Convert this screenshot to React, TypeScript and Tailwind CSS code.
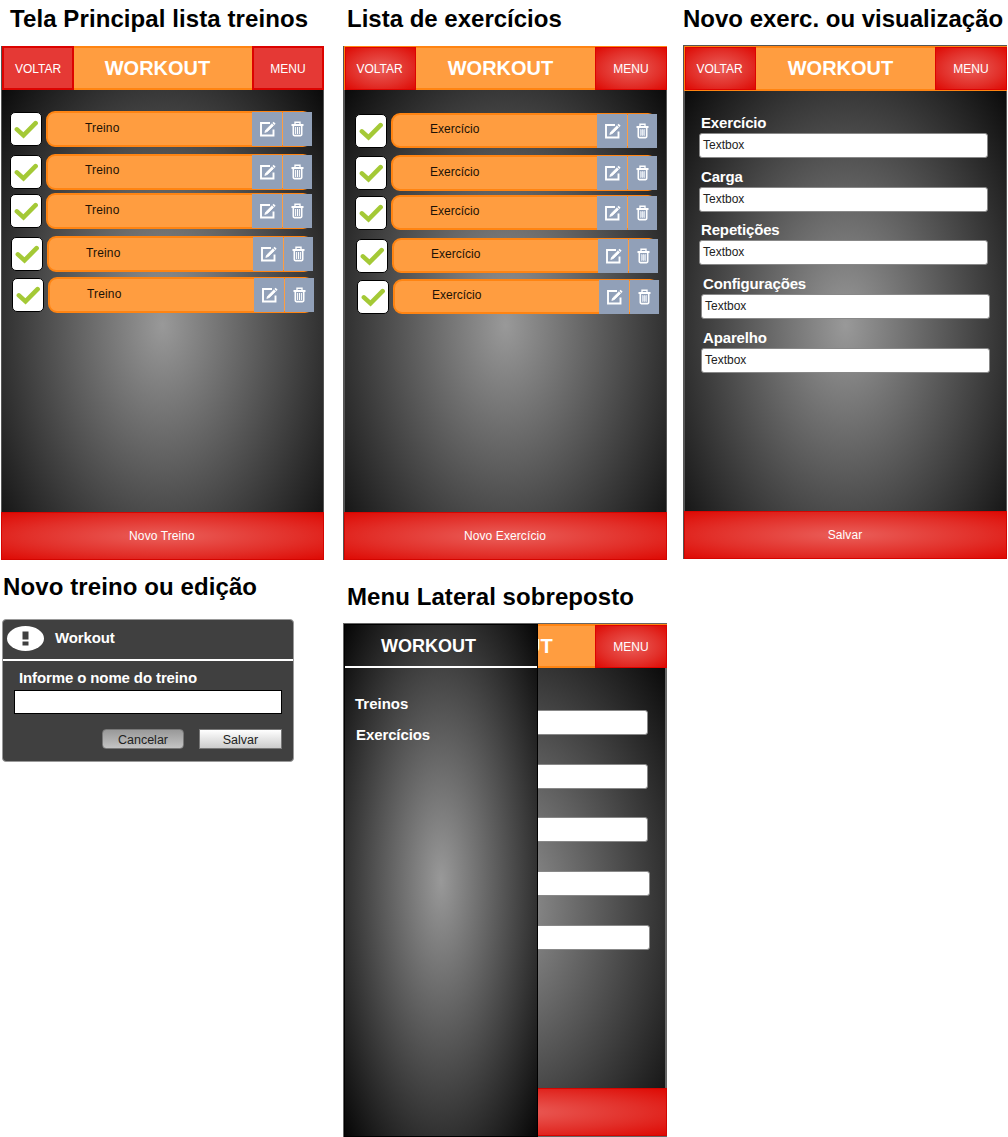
import React from "react";

const screenGlow = "bg-[radial-gradient(230px_358px_at_50%_279px,#999999_0%,#040404_100%)]";
const menuGlow = "bg-[radial-gradient(ellipse_farthest-corner_at_50%_50%,#999999_0%,#060606_100%)]";
const redGlow = "bg-[radial-gradient(ellipse_farthest-corner_at_50%_50%,#ea5f5a_0%,#e22f29_60%,#de0a04_100%)]";

function Title({ children, className }: { children: string; className: string }) {
  return <h2 className={`whitespace-nowrap text-[24px] font-bold leading-[28px] text-black ${className}`}>{children}</h2>;
}

function Check() {
  return (
    <svg viewBox="0 0 24 20" className="mt-[2px] h-[20px] w-[24px]" fill="none" stroke="#a4c936" strokeWidth="4.6">
      <path d="M2.9 9.4 9.5 15.4 21.6 3.2" strokeLinecap="round" strokeLinejoin="miter" />
    </svg>
  );
}

function EditIcon() {
  return (
    <svg viewBox="0 0 17 17" className="h-[17px] w-[17px]" fill="none" stroke="#fff">
      <path d="M11 2H2v12.5h12.5V8.5" strokeWidth="1.9" />
      <path d="M5.8 11.4 6.8 8.9 13 2.8l1.6 1.6L8.4 10.5Z" fill="#fff" strokeWidth="0.8" />
      <path d="m14 1.3 2 2" strokeWidth="1.8" />
    </svg>
  );
}

function TrashIcon({ solid }: { solid?: boolean }) {
  return (
    <svg viewBox="0 0 13 16" className="h-[16px] w-[13px]" fill="none" stroke="#fff">
      <path d="M.5 4h12" strokeWidth="2" />
      <path d="M4 3V1.3h5V3" strokeWidth="1.4" />
      <path d="M2.3 5v8.6q0 1 1 1h6.4q1 0 1-1V5" strokeWidth="1.6" />
      {solid && <path d="M4.3 6.5h4.4v6H4.3z" fill="#ccd5e3" stroke="none" />}
      <path d="M4.6 6v7M6.5 6v7M8.4 6v7" strokeWidth={solid ? "0.5" : "1"} />
    </svg>
  );
}

function Row({ label, className, textClass, height, solid }: { label: string; className: string; textClass: string; height: string; solid?: boolean }) {
  return (
    <div className={`flex ${height} ${className}`}>
      <div className={`flex h-[34px] w-[32px] items-center justify-center rounded-[5px] border border-black bg-white ${solid ? "mt-[0.5px]" : "mt-px"}`}>
        <Check />
      </div>
      <div className={`ml-[4px] flex w-[266px] rounded-[9px] border-2 border-[#ff8412] bg-[#ff9d40] ${height}`}>
        <span className={`w-[204px] pl-[37px] text-[12px] leading-[16px] text-[#1c1206] ${solid ? "" : "tracking-[0.15px]"} ${textClass}`}>{label}</span>
        <div className="-mt-px -mr-[2px] flex h-[34px] w-[60px] shrink-0">
          <div className="flex w-[30px] items-center justify-center bg-[#91a0b8] pl-px"><EditIcon /></div>
          <div className="ml-px flex w-[29px] items-center justify-center bg-[#91a0b8]"><TrashIcon solid={solid} /></div>
        </div>
      </div>
    </div>
  );
}

function Footer({ label, className }: { label: string; className: string }) {
  return (
    <footer className={`flex h-[48px] w-[323px] items-center justify-center border border-[#d40500] pr-px text-[12px] tracking-[0.1px] text-white ${redGlow} ${className}`}>{label}</footer>
  );
}

function Header({ flat, back = true, className }: { flat?: boolean; back?: boolean; className: string }) {
  const btn = flat ? "border-2 border-[#dc0300] bg-[#e53935]" : `border border-[#dc0300] ${redGlow}`;
  return (
    <header className={`flex justify-between text-[12px] text-white ${className}`}>
      {back ? (
        <button className={`flex items-center justify-center pt-px ${flat ? "w-[72px]" : "w-[71px] pr-[2px]"} ${btn}`}>VOLTAR</button>
      ) : (
        <span className="w-[71px]" />
      )}
      <h1 className={`flex items-center text-[20px] font-bold leading-none ${flat ? "pr-[11px]" : "pr-[10px] pb-[2px]"}`}>WORKOUT</h1>
      <button className={`flex w-[72px] items-center justify-center pt-px ${btn}`}>MENU</button>
    </header>
  );
}

const fields = [
  { label: "Exercício", cls: "mt-[24px] ml-[15px]" },
  { label: "Carga", cls: "mt-[11px] ml-[15px]" },
  { label: "Repetições", cls: "mt-[10px] ml-[15px]" },
  { label: "Configurações", cls: "mt-[11px] ml-[17px]" },
  { label: "Aparelho", cls: "mt-[11px] ml-[17px]" },
];

function Form({ empty }: { empty?: boolean }) {
  return (
    <div>
      {fields.map((f) => (
        <div key={f.label} className={`w-[289px] ${f.cls}`}>
          <div className="h-[18px] pl-[2px] text-[15px] font-bold leading-[15px] tracking-[-0.15px] text-white">{empty ? "" : f.label}</div>
          <div className="h-[25px] rounded-[3px] border border-[#888] bg-white pl-[3px] text-[12px] leading-[22px] text-[#222]">{empty ? "" : "Textbox"}</div>
        </div>
      ))}
    </div>
  );
}

export default function App() {
  return (
    <main className="flex h-[1137px] w-[1008px] overflow-hidden bg-white font-['Liberation_Sans',Arial,sans-serif]">
      <div className="w-[343px] shrink-0">
        <Title className="mt-[5px] ml-[10px] tracking-[0.09px]">Tela Principal lista treinos</Title>
        <section className={`mt-[13px] ml-px flex h-[514px] w-[323px] flex-col border-r border-l border-[#555] ${screenGlow}`}>
          <Header flat className="h-[44px] w-[322px] shrink-0 border-y-2 border-[#ff8412] bg-[#ff9d40] *:-my-[2px]" />
          <div className="h-[422px]">
            <Row height="h-[36px]" label="Treino" className="mt-[21px] ml-[8px]" textClass="mt-[7px]" />
            <Row height="h-[36px]" label="Treino" className="mt-[7px] ml-[8px]" textClass="mt-[6px]" />
            <Row height="h-[36px]" label="Treino" className="mt-[3px] ml-[8px]" textClass="mt-[7px]" />
            <Row height="h-[36px]" label="Treino" className="mt-[7px] ml-[9px]" textClass="mt-[7px]" />
            <Row height="h-[36px]" label="Treino" className="mt-[5px] ml-[10px]" textClass="mt-[7px]" />
          </div>
          <Footer label="Novo Treino" className="-ml-px" />
        </section>
        <Title className="mt-[13px] ml-[3px] tracking-[0.1px]">Novo treino ou edição</Title>
        <section className="mt-[18px] ml-[2px] h-[143px] w-[292px] rounded-[4px] border border-[#999] bg-[#404040] text-white">
          <div className="flex h-[41px] items-center border-b-2 border-white pb-[3px] pl-[4px]">
            <svg viewBox="0 0 37 25" className="h-[25px] w-[37px]">
              <ellipse cx="18.5" cy="12.5" rx="18.5" ry="12.5" fill="#fff" />
              <path d="M15.5 5.5h6v8h-6zM15.5 15.5h6v4h-6z" fill="#404040" />
            </svg>
            <span className="ml-[11px] text-[15px] font-bold leading-[18px] tracking-[-0.15px]">Workout</span>
          </div>
          <div className="mt-[8px] ml-[16px] text-[15px] font-bold leading-[18px] tracking-[-0.12px]">Informe o nome do treino</div>
          <div className="mt-[3px] ml-[11px] h-[24px] w-[268px] border border-black bg-white" />
          <div className="mt-[15px] mr-[11px] flex justify-end gap-[15px] text-[12.5px] text-[#222]">
            <button className="h-[20px] w-[82px] rounded-[4px] border border-[#777] bg-linear-to-b from-[#999] to-[#c4c4c4] leading-[20px]">Cancelar</button>
            <button className="h-[20px] w-[83px] border border-[#777] bg-linear-to-b from-white to-[#ccc] leading-[20px]">Salvar</button>
          </div>
        </section>
      </div>

      <div className="w-[340px] shrink-0">
        <Title className="mt-[5px] ml-[4px]">Lista de exercícios</Title>
        <section className={`mt-[13px] flex h-[514px] w-[324px] flex-col border-r border-l-2 border-[#555] ${screenGlow}`}>
          <Header className="-ml-px h-[44px] w-[323px] shrink-0 border-y-2 border-l border-[#ff8412] bg-[#ff9d40] *:-mt-px *:-mb-[2px]" />
          <div className="h-[422px]">
            <Row solid height="h-[35px]" label="Exercício" className="mt-[23px] ml-[10px]" textClass="mt-[6px]" />
            <Row solid height="h-[36px]" label="Exercício" className="mt-[7px] ml-[10px]" textClass="mt-[7px]" />
            <Row solid height="h-[35px]" label="Exercício" className="mt-[4px] ml-[10px]" textClass="mt-[6px]" />
            <Row solid height="h-[35px]" label="Exercício" className="mt-[8px] ml-[11px]" textClass="mt-[6px]" />
            <Row solid height="h-[35px]" label="Exercício" className="mt-[6px] ml-[12px]" textClass="mt-[6px]" />
          </div>
          <Footer label="Novo Exercício" className="-ml-px" />
        </section>
        <Title className="mt-[23px] ml-[4px] tracking-[0.07px]">Menu Lateral sobreposto</Title>
        <section className={`relative mt-[12px] h-[514px] w-[324px] border-t border-r-2 border-b-2 border-l border-[#666] ${screenGlow}`}>
          <Header back={false} className="h-[44px] w-[323px] border-y-2 border-[#ff8412] bg-[#ff9d40] *:-mt-px *:-mb-[2px]" />
          <div className="h-[420px] overflow-hidden"><Form empty /></div>
          <Footer label="" className="" />
          <nav className={`absolute top-0 left-0 h-[513px] w-[194px] border border-black text-[15px] font-bold leading-[18px] text-white ${menuGlow}`}>
            <div className="h-[43px] border-b-2 border-white pt-[10px] pl-[36px] text-[18px] leading-[22px]">WORKOUT</div>
            <div className="mt-[27px] ml-[10px]">Treinos</div>
            <div className="mt-[13px] ml-[11px] tracking-[-0.1px]">Exercícios</div>
          </nav>
        </section>
      </div>

      <div className="w-[325px] shrink-0">
        <Title className="mt-[5px]">Novo exerc. ou visualização</Title>
        <section className={`mt-[12px] flex h-[514px] w-[324px] flex-col border-t border-r border-l-2 border-[#555] ${screenGlow}`}>
          <Header className="-ml-px h-[45px] w-[323px] shrink-0 border-y-2 border-l border-[#ff8412] bg-[#ff9d40] *:-my-px" />
          <div className="-ml-px h-[420px]"><Form /></div>
          <Footer label="Salvar" className="-ml-px" />
        </section>
      </div>
    </main>
  );
}
